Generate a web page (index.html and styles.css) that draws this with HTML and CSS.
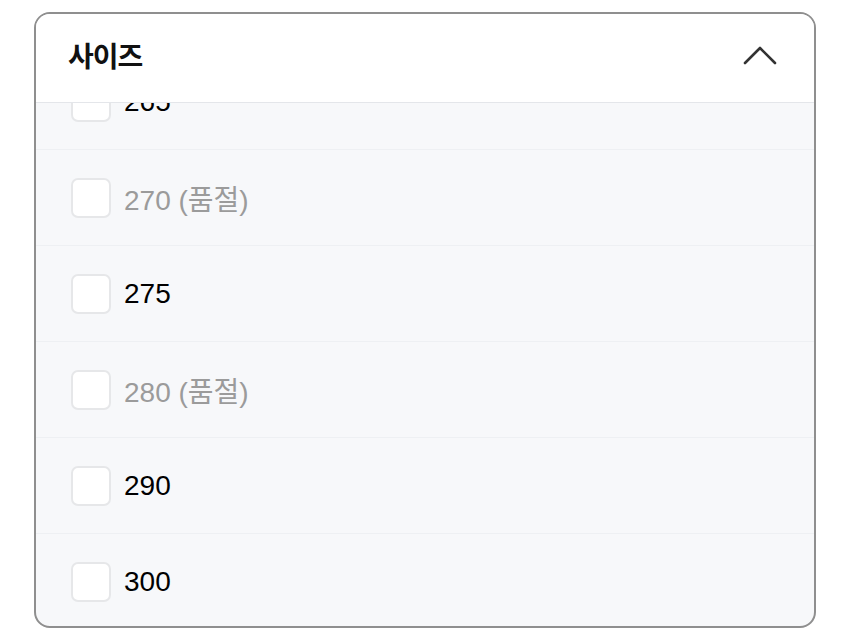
FILE: index.html
```html
<!DOCTYPE html>
<html lang="ko">
<head>
    <meta charset="UTF-8">
    <meta name="viewport" content="width=device-width, initial-scale=1.0">
    <title>사이즈 필터</title>
    <link rel="stylesheet" href="styles.css">
</head>
<body>
    <div class="filter-box">
        <div class="filter-header">
            <h2>사이즈</h2>
            <svg class="chevron" width="34" height="20" viewBox="0 0 34 20">
                <polyline points="2,18 17,3 32,18" fill="none" stroke="#333" stroke-width="2.6" stroke-linecap="round" stroke-linejoin="round"/>
            </svg>
        </div>
        <div class="size-viewport">
            <ul class="size-list">
                <li class="size-row"><span class="check"></span><span class="size-label">265</span></li>
                <li class="size-row sold-out"><span class="check"></span><span class="size-label">270 (품절)</span></li>
                <li class="size-row"><span class="check"></span><span class="size-label">275</span></li>
                <li class="size-row sold-out"><span class="check"></span><span class="size-label">280 (품절)</span></li>
                <li class="size-row"><span class="check"></span><span class="size-label">290</span></li>
                <li class="size-row"><span class="check"></span><span class="size-label">300</span></li>
            </ul>
        </div>
    </div>
</body>
</html>
```

FILE: styles.css
```css
body {
    margin: 0;
    padding: 12px 34px;
    background-color: #fff;
    font-family: "Liberation Sans", "Noto Sans CJK KR", sans-serif;
}
.filter-box {
    border: 2px solid #8f8f8f;
    border-radius: 16px;
    overflow: hidden;
    background-color: #f7f8fa;
}
.filter-header {
    height: 88px;
    display: flex;
    align-items: center;
    justify-content: space-between;
    padding: 0 37px 0 32px;
    background-color: #fff;
    border-bottom: 1px solid #e4e6ea;
}
.filter-header h2 {
    margin: -6px 0 0 0;
    font-family: "Noto Sans CJK KR", sans-serif;
    font-size: 28px;
    font-weight: 700;
    color: #111;
    letter-spacing: -1px;
}
.chevron {
    display: block;
    margin-top: -6px;
}
.size-viewport {
    height: 523px;
    overflow: hidden;
}
.size-list {
    list-style: none;
    margin: -49px 0 0 0;
    padding: 0;
}
.size-row {
    height: 95px;
    display: flex;
    align-items: center;
    padding-left: 35px;
    border-bottom: 1px solid #eef0f3;
}
.check {
    width: 36px;
    height: 36px;
    border: 2px solid #e6e7e9;
    border-radius: 7px;
    background-color: #fff;
    margin-right: 13px;
}
.size-label {
    font-size: 28px;
    color: #000;
}
.sold-out .size-label {
    color: #9b9b9b;
}
```
